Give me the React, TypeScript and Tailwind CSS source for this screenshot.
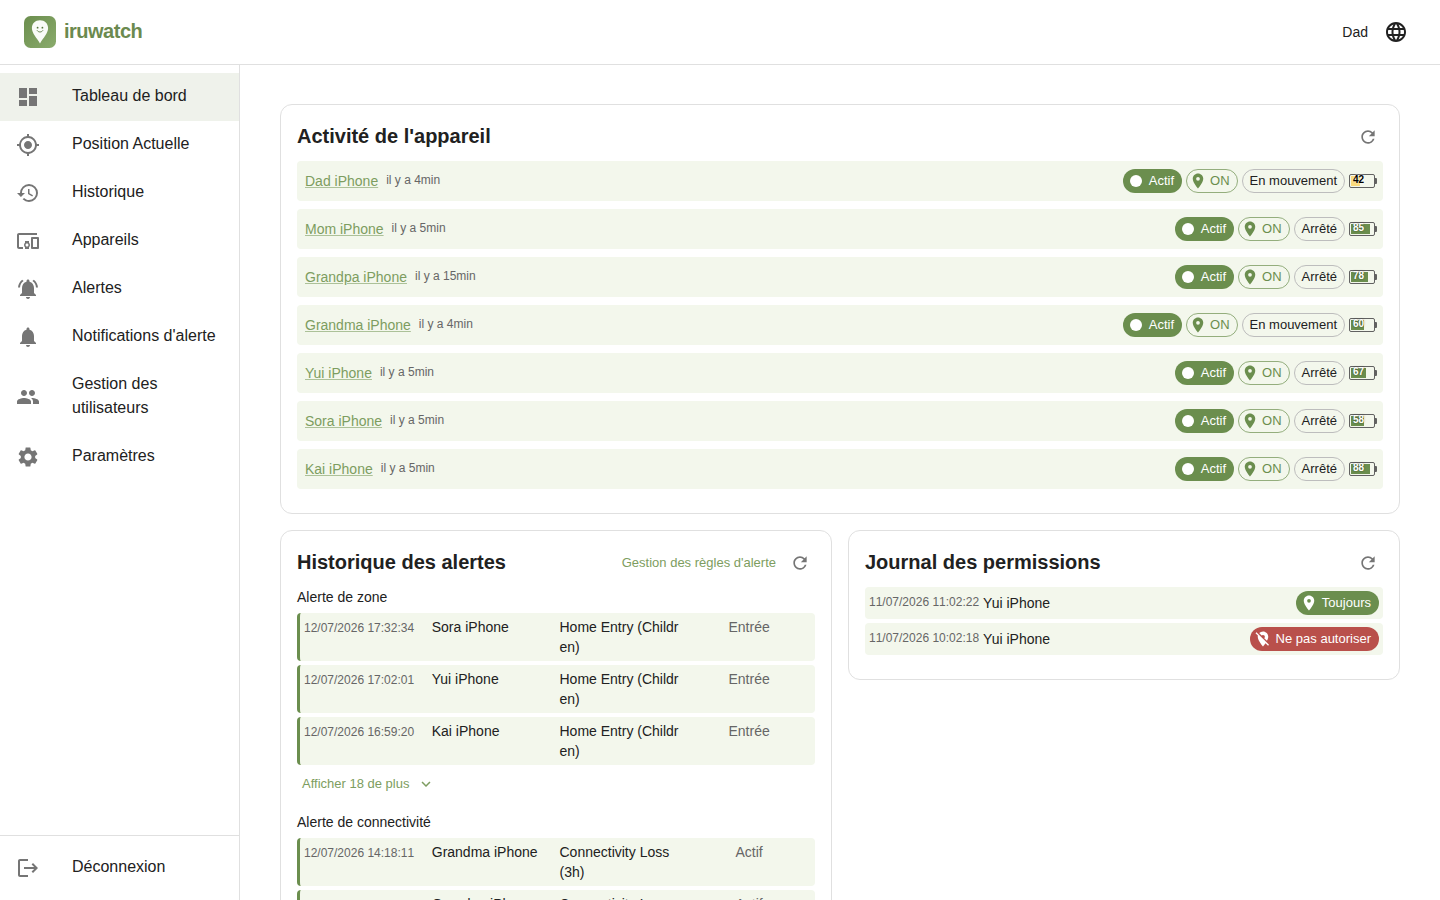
import type { ReactNode } from "react";
import type { IconType } from "react-icons";
import {
  MdDashboard,
  MdDevicesOther,
  MdExpandMore,
  MdFiberManualRecord,
  MdHistory,
  MdLanguage,
  MdLocationOff,
  MdLocationOn,
  MdLogout,
  MdMyLocation,
  MdNotifications,
  MdNotificationsActive,
  MdPeople,
  MdRefresh,
  MdSettings,
} from "react-icons/md";

type Device = { name: string; seen: string; moving: boolean; battery: number };
type Alert = { date: string; device: string; rule: string; status: string };

const navItems: { label: string; icon: IconType }[] = [
  { label: "Tableau de bord", icon: MdDashboard },
  { label: "Position Actuelle", icon: MdMyLocation },
  { label: "Historique", icon: MdHistory },
  { label: "Appareils", icon: MdDevicesOther },
  { label: "Alertes", icon: MdNotificationsActive },
  { label: "Notifications d'alerte", icon: MdNotifications },
  { label: "Gestion des utilisateurs", icon: MdPeople },
  { label: "Paramètres", icon: MdSettings },
];

const devices: Device[] = [
  { name: "Dad iPhone", seen: "il y a 4min", moving: true, battery: 42 },
  { name: "Mom iPhone", seen: "il y a 5min", moving: false, battery: 85 },
  { name: "Grandpa iPhone", seen: "il y a 15min", moving: false, battery: 78 },
  { name: "Grandma iPhone", seen: "il y a 4min", moving: true, battery: 60 },
  { name: "Yui iPhone", seen: "il y a 5min", moving: false, battery: 67 },
  { name: "Sora iPhone", seen: "il y a 5min", moving: false, battery: 58 },
  { name: "Kai iPhone", seen: "il y a 5min", moving: false, battery: 88 },
];

const zoneAlerts: Alert[] = [
  { date: "12/07/2026 17:32:34", device: "Sora iPhone", rule: "Home Entry (Children)", status: "Entrée" },
  { date: "12/07/2026 17:02:01", device: "Yui iPhone", rule: "Home Entry (Children)", status: "Entrée" },
  { date: "12/07/2026 16:59:20", device: "Kai iPhone", rule: "Home Entry (Children)", status: "Entrée" },
];

const connectivityAlerts: Alert[] = [
  { date: "12/07/2026 14:18:11", device: "Grandma iPhone", rule: "Connectivity Loss (3h)", status: "Actif" },
  { date: "12/07/2026 11:18:11", device: "Grandpa iPhone", rule: "Connectivity Loss (3h)", status: "Actif" },
];

function Logo() {
  return (
    <svg viewBox="0 0 32 32" className="size-8">
      <defs>
        <linearGradient id="logo-bg" x1="0" y1="0" x2="1" y2="1">
          <stop offset="0" stopColor="#6b8e4e" />
          <stop offset="1" stopColor="#8aab6c" />
        </linearGradient>
      </defs>
      <rect width="32" height="32" rx="6.5" fill="url(#logo-bg)" />
      <path d="M16 4.300c-4.700 0-8.100 3.300-8.100 7.800 0 5.200 4.700 9.700 8.100 15.400 3.400-5.700 8.100-10.200 8.100-15.400 0-4.500-3.400-7.800-8.100-7.800z" fill="#f9fbf7" />
      <circle cx="13.600" cy="11.700" r="0.900" fill="#55753c" />
      <circle cx="18.400" cy="11.700" r="0.900" fill="#55753c" />
      <path d="M13.300 14.700c1.300 1.800 4.100 1.800 5.400 0" fill="none" stroke="#55753c" strokeWidth="0.9" strokeLinecap="round" />
    </svg>
  );
}

function NavItem({ label, icon: Icon, active }: { label: string; icon: IconType; active?: boolean }) {
  return (
    <a className={`flex items-center px-4 py-2 ${active ? "bg-[#eff2eb]" : ""}`}>
      <span className="w-14 shrink-0">
        <Icon className="size-6 text-[#757575]" />
      </span>
      <span className="mt-[3px] mb-[5px] leading-6">{label}</span>
    </a>
  );
}

function Card({ title, action, children }: { title: string; action?: ReactNode; children: ReactNode }) {
  return (
    <section className="rounded-xl border border-[#e0e0e0] bg-white px-4 pt-4 pb-6">
      <div className="mb-2 flex h-8 items-center justify-between">
        <h2 className="pb-0.5 text-xl leading-[30px] font-bold">{title}</h2>
        <div className="flex items-center gap-1">
          {action}
          <button type="button" className="p-[5px]">
            <MdRefresh className="size-5 text-[#757575]" />
          </button>
        </div>
      </div>
      {children}
    </section>
  );
}

function FilledChip({ icon: Icon, label, danger }: { icon: IconType; label: string; danger?: boolean }) {
  return (
    <span
      className={`flex h-6 items-center rounded-full pl-1 text-[13px] whitespace-nowrap text-white ${danger ? "bg-[#b9504b]" : "bg-[#6b8e4e]"}`}
    >
      <Icon className="-mr-1 size-[18px]" />
      <span className="px-2">{label}</span>
    </span>
  );
}

function Battery({ level }: { level: number }) {
  const low = level < 50;
  return (
    <div className="relative h-3.5 w-[26px] rounded-[2px] border border-[#616161] p-px">
      <div className={`h-full ${low ? "bg-[#fbdb7c]" : "bg-[#6b8e4e]"}`} style={{ width: (level * 22) / 100 }} />
      <span
        className={`absolute top-0 left-[3px] text-[10px] leading-[10px] font-bold ${low ? "text-black [text-shadow:0_0_2px_#fff]" : "text-white [text-shadow:0_0_2px_rgba(0,0,0,0.5)]"}`}
      >
        {level}
      </span>
      <div className="absolute top-[3px] -right-[3px] h-1.5 w-0.5 rounded-r-[1px] bg-[#616161]" />
    </div>
  );
}

function DeviceRow({ device }: { device: Device }) {
  return (
    <div className="flex h-10 items-center justify-between rounded-[4px] bg-[#f3f7ec] px-2">
      <div className="flex items-center gap-2">
        <a className="text-sm leading-5 text-[#7d9d60] underline decoration-[#7d9d60]/60">{device.name}</a>
        <span className="pb-0.5 text-xs leading-5 text-[#666666]">{device.seen}</span>
      </div>
      <div className="flex items-center gap-1">
        <FilledChip icon={MdFiberManualRecord} label="Actif" />
        <span className="flex h-6 items-center rounded-full border border-[#6b8e4e]/70 pl-0.5 text-[13px] text-[#6b8e4e]">
          <MdLocationOn className="-mr-1 size-[18px]" />
          <span className="px-[7px]">ON</span>
        </span>
        <span className="flex h-6 items-center rounded-full border border-[#bdbdbd] px-[7px] text-[13px]">
          {device.moving ? "En mouvement" : "Arrêté"}
        </span>
        <Battery level={device.battery} />
      </div>
    </div>
  );
}

function AlertGroup({ title, alerts }: { title: string; alerts: Alert[] }) {
  return (
    <>
      <h3 className="mb-1 pb-0.5 text-sm leading-5">{title}</h3>
      <div className="flex flex-col gap-1">
        {alerts.map((alert) => (
          <div
            key={alert.date}
            className="grid grid-cols-4 gap-1 rounded-[4px] border-l-3 border-[#6b8e4e] bg-[#f3f7ec] p-1 text-sm leading-5"
          >
            <span className="pt-px text-xs leading-5 whitespace-nowrap text-[#666666] [font-kerning:none]">{alert.date}</span>
            <span>{alert.device}</span>
            <span className={alert.status === "Entrée" ? "break-all" : ""}>{alert.rule}</span>
            <span className="text-center text-[#666666]">{alert.status}</span>
          </div>
        ))}
      </div>
    </>
  );
}

function PermissionRow({ date, device, children }: { date: string; device: string; children: ReactNode }) {
  return (
    <div className="flex h-8 items-center gap-1 rounded-[4px] bg-[#f3f7ec] px-1">
      <span className="pb-0.5 text-xs leading-5 text-[#666666] [font-kerning:none]">{date}</span>
      <span className="flex-1 text-sm leading-5">{device}</span>
      {children}
    </div>
  );
}

export default function App() {
  return (
    <div className="flex h-[900px] flex-col overflow-hidden bg-white font-['Liberation_Sans',Arial,sans-serif] text-[#212121]">
      <header className="flex h-[65px] shrink-0 items-center justify-between border-b border-[#e0e0e0] px-6">
        <div className="flex items-center gap-2">
          <Logo />
          <span className="pb-0.5 text-xl leading-[30px] font-bold tracking-[-0.5px] text-[#6b8a4f]">iruwatch</span>
        </div>
        <div className="flex items-center gap-2">
          <span className="text-sm">Dad</span>
          <button type="button" className="p-2">
            <MdLanguage className="size-6" />
          </button>
        </div>
      </header>

      <div className="flex min-h-0 flex-1">
        <aside className="flex w-60 shrink-0 flex-col justify-between border-r border-[#e0e0e0]">
          <nav className="py-2">
            {navItems.map((item, i) => (
              <NavItem key={item.label} label={item.label} icon={item.icon} active={i === 0} />
            ))}
          </nav>
          <div className="border-t border-[#e0e0e0] py-2">
            <NavItem label="Déconnexion" icon={MdLogout} />
          </div>
        </aside>

        <main className="flex flex-1 flex-col gap-4 overflow-hidden px-10 pt-[39px]">
          <Card title="Activité de l'appareil">
            <div className="flex flex-col gap-2">
              {devices.map((device) => (
                <DeviceRow key={device.name} device={device} />
              ))}
            </div>
          </Card>

          <div className="grid grid-cols-2 items-start gap-4">
            <Card
              title="Historique des alertes"
              action={<a className="px-[5px] text-[13px] text-[#7d9d60]">Gestion des règles d'alerte</a>}
            >
              <AlertGroup title="Alerte de zone" alerts={zoneAlerts} />
              <button type="button" className="mt-[3px] mb-[13px] flex h-[31px] items-center px-[5px] text-[13px] text-[#7d9d60]">
                Afficher 18 de plus
                <MdExpandMore className="mt-px ml-2 size-[18px]" />
              </button>
              <AlertGroup title="Alerte de connectivité" alerts={connectivityAlerts} />
            </Card>

            <Card title="Journal des permissions">
              <div className="flex flex-col gap-1">
                <PermissionRow date="11/07/2026 11:02:22" device="Yui iPhone">
                  <FilledChip icon={MdLocationOn} label="Toujours" />
                </PermissionRow>
                <PermissionRow date="11/07/2026 10:02:18" device="Yui iPhone">
                  <FilledChip icon={MdLocationOff} label="Ne pas autoriser" danger />
                </PermissionRow>
              </div>
            </Card>
          </div>
        </main>
      </div>
    </div>
  );
}
